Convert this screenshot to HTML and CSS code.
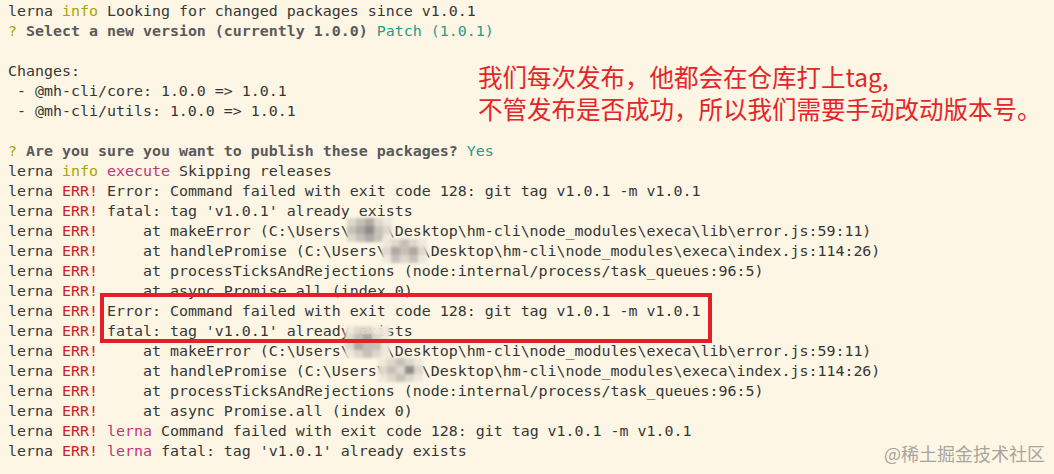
FILE: index.html
```html
<!DOCTYPE html>
<html lang="zh-CN">
<head>
<meta charset="utf-8">
<title>lerna publish</title>
<link rel="stylesheet" href="styles.css">
</head>
<body>
<div class="screen">
<div class="term">
<div class="l">lerna <span class="info">info</span> Looking for changed packages since v1.0.1</div>
<div class="l"><span class="q">?</span> <span class="bold">Select a new version (currently 1.0.0)</span> <span class="ans">Patch (1.0.1)</span></div>
<div class="l"> </div>
<div class="l">Changes:</div>
<div class="l"> - @mh-cli/core: 1.0.0 =&gt; 1.0.1</div>
<div class="l"> - @mh-cli/utils: 1.0.0 =&gt; 1.0.1</div>
<div class="l"> </div>
<div class="l"><span class="q">?</span> <span class="bold">Are you sure you want to publish these packages?</span> <span class="ans">Yes</span></div>
<div class="l">lerna <span class="info">info</span> <span class="mag">execute</span> Skipping releases</div>
<div class="l">lerna <span class="err">ERR!</span> Error: Command failed with exit code 128: git tag v1.0.1 -m v1.0.1</div>
<div class="l">lerna <span class="err">ERR!</span> fatal: tag 'v1.0.1' already exists</div>
<div class="l">lerna <span class="err">ERR!</span>     at makeError (C:\Users\    \Desktop\hm-cli\node_modules\execa\lib\error.js:59:11)</div>
<div class="l">lerna <span class="err">ERR!</span>     at handlePromise (C:\Users\    \Desktop\hm-cli\node_modules\execa\index.js:114:26)</div>
<div class="l">lerna <span class="err">ERR!</span>     at processTicksAndRejections (node:internal/process/task_queues:96:5)</div>
<div class="l">lerna <span class="err">ERR!</span>     at async Promise.all (index 0)</div>
<div class="l">lerna <span class="err">ERR!</span> Error: Command failed with exit code 128: git tag v1.0.1 -m v1.0.1</div>
<div class="l">lerna <span class="err">ERR!</span> fatal: tag 'v1.0.1' already exists</div>
<div class="l">lerna <span class="err">ERR!</span>     at makeError (C:\Users\    \Desktop\hm-cli\node_modules\execa\lib\error.js:59:11)</div>
<div class="l">lerna <span class="err">ERR!</span>     at handlePromise (C:\Users\    \Desktop\hm-cli\node_modules\execa\index.js:114:26)</div>
<div class="l">lerna <span class="err">ERR!</span>     at processTicksAndRejections (node:internal/process/task_queues:96:5)</div>
<div class="l">lerna <span class="err">ERR!</span>     at async Promise.all (index 0)</div>
<div class="l">lerna <span class="err">ERR!</span> <span class="mag">lerna</span> Command failed with exit code 128: git tag v1.0.1 -m v1.0.1</div>
<div class="l">lerna <span class="err">ERR!</span> <span class="mag">lerna</span> fatal: tag 'v1.0.1' already exists</div>
</div>

<div class="mosaic m1">
  <i class="c1"></i><i class="c2"></i><i class="c3"></i><i class="c1"></i><i class="c0"></i>
  <i class="c2"></i><i class="c3"></i><i class="c4"></i><i class="c2"></i><i class="c1"></i>
  <i class="c1"></i><i class="c2"></i><i class="c3"></i><i class="c2"></i><i class="c0"></i>
</div>
<div class="mosaic m2">
  <i class="c0"></i><i class="c1"></i><i class="c2"></i><i class="c1"></i><i class="c0"></i>
  <i class="c1"></i><i class="c3"></i><i class="c2"></i><i class="c3"></i><i class="c1"></i>
  <i class="c0"></i><i class="c2"></i><i class="c1"></i><i class="c2"></i><i class="c0"></i>
</div>
<div class="mosaic m3">
  <i class="c0"></i><i class="c1"></i><i class="c1"></i><i class="c0"></i><i class="c0"></i>
  <i class="c1"></i><i class="c2"></i><i class="c3"></i><i class="c1"></i><i class="c0"></i>
  <i class="c1"></i><i class="c3"></i><i class="c2"></i><i class="c2"></i><i class="c0"></i>
  <i class="c0"></i><i class="c1"></i><i class="c2"></i><i class="c1"></i><i class="c0"></i>
</div>
<div class="mosaic m4">
  <i class="c0"></i><i class="c1"></i><i class="c2"></i><i class="c1"></i><i class="c0"></i>
  <i class="c1"></i><i class="c2"></i><i class="c1"></i><i class="c4"></i><i class="c1"></i>
  <i class="c0"></i><i class="c1"></i><i class="c2"></i><i class="c1"></i><i class="c0"></i>
</div>

<div class="redbox"></div>

<div class="note">
  <div class="note-line">我们每次发布，他都会在仓库打上tag,</div>
  <div class="note-line">不管发布是否成功，所以我们需要手动改动版本号。</div>
</div>

<div class="mark">@稀土掘金技术社区</div>
</div>
</body>
</html>
```

FILE: styles.css
```css
html, body {
  margin: 0;
  padding: 0;
  background: #fdf6e4;
}

.screen {
  position: relative;
  width: 1054px;
  height: 474px;
  overflow: hidden;
  background: #fdf6e4;
}

.term {
  padding: 1px 8px 0;
  font-family: "DejaVu Sans Mono", "Liberation Mono", monospace;
  font-size: 14.95px;
  line-height: 20px;
  color: #363636;
}

.l {
  white-space: pre;
  height: 20px;
}

.info { color: #a8a400; }
.q { color: #a8a400; }
.bold { font-weight: bold; color: #5a5a5a; }
.ans { color: #2a9a8c; }
.mag { color: #c4337a; }
.err { color: #c82424; }

.mosaic {
  position: absolute;
  display: grid;
  grid-template-columns: repeat(5, 9px);
  grid-auto-rows: 8px;
  filter: blur(1.6px);
  opacity: 0.95;
}
.mosaic i { display: block; }
.mosaic .c0 { background: #efe9dc; }
.mosaic .c1 { background: #ddd7cb; }
.mosaic .c2 { background: #c4bfb6; }
.mosaic .c3 { background: #a9a59f; }
.mosaic .c4 { background: #8a8784; }

.m1 { left: 347px; top: 218px; }
.m2 { left: 382px; top: 239px; }
.m3 { left: 345px; top: 326px; }
.m4 { left: 378px; top: 358px; }

.redbox {
  position: absolute;
  left: 100px;
  top: 293px;
  width: 604px;
  height: 42px;
  border: 4px solid #e3202a;
}

.note {
  position: absolute;
  left: 478px;
  top: 61px;
  font-family: "Noto Sans CJK SC", "Noto Sans", sans-serif;
  font-size: 24.5px;
  color: #e42629;
  white-space: nowrap;
}

.note-line {
  line-height: 32px;
}

.mark {
  position: absolute;
  right: 9px;
  top: 442px;
  font-family: "Noto Sans CJK SC", "Noto Sans", sans-serif;
  font-size: 18px;
  line-height: 22px;
  color: #aaa59c;
  white-space: nowrap;
}
```
